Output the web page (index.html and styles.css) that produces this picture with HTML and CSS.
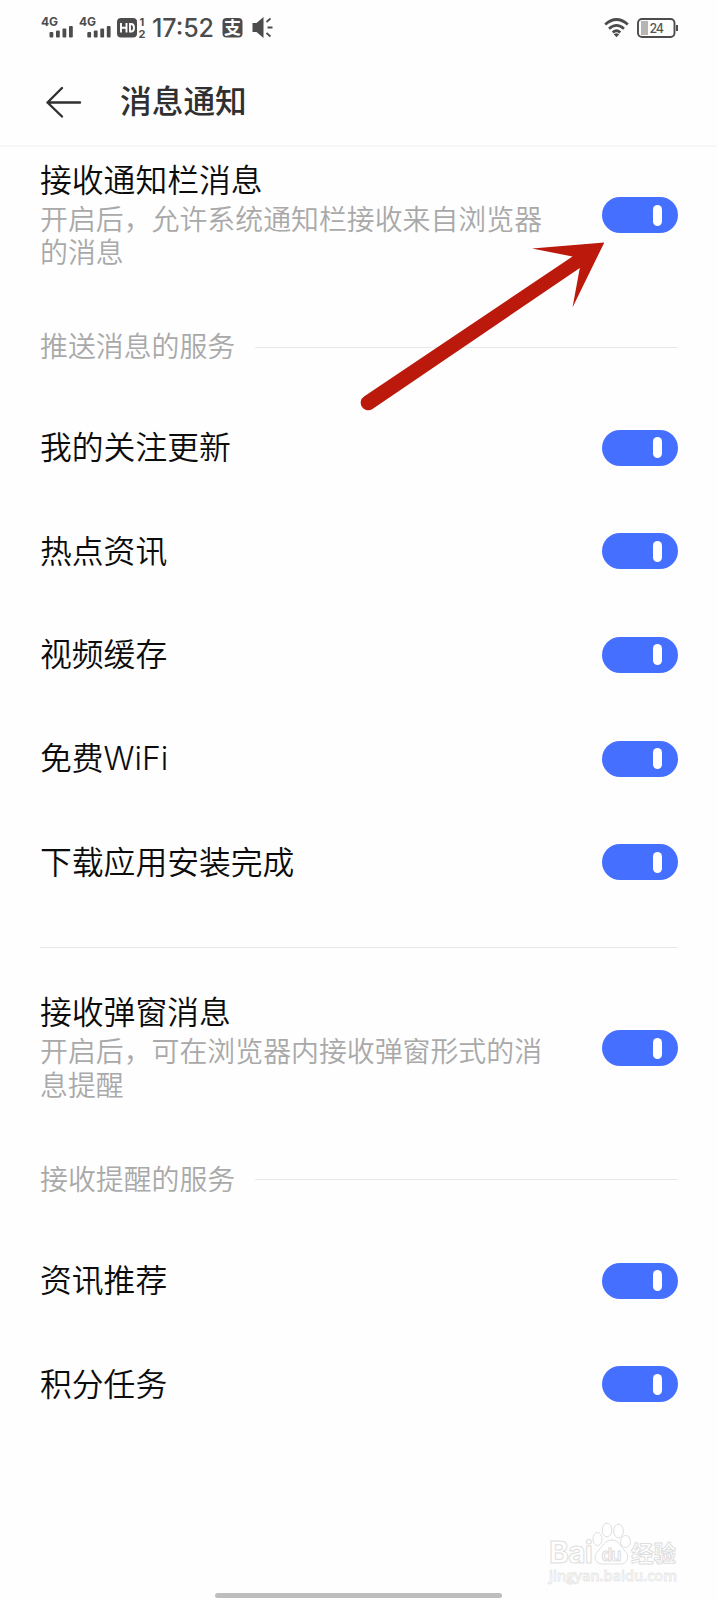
FILE: index.html
```html
<!DOCTYPE html>
<html lang="zh-CN">
<head>
<meta charset="utf-8">
<title>消息通知</title>
<link rel="stylesheet" href="styles.css">
</head>
<body>
<div class="screen">
  <div class="status">
    <svg class="status-left" width="245" height="30" viewBox="0 0 245 30">
      <g fill="#4c4c4c" font-family="Inter, sans-serif" font-weight="700" font-size="12">
        <text x="1" y="11" textLength="17">4G</text>
        <text x="39" y="11" textLength="17">4G</text>
        <g id="bars">
          <rect x="9.5" y="17" width="3.8" height="5.500" rx="1"/><rect x="16" y="15.5" width="3.8" height="7" rx="1"/><rect x="22.5" y="13.5" width="3.8" height="9" rx="1"/><rect x="29" y="11" width="3.8" height="11.500" rx="1"/>
        </g>
        <use href="#bars" x="37.8"/>
        <rect x="77" y="3" width="20" height="19.5" rx="4"/>
        <path fill="none" stroke="#fff" stroke-width="1.900" d="M81 8v9.500M86.500 8v9.500M81 12.700h5.500M90 9v7.500h1.200q2.800 0 2.800-3.750t-2.800-3.750z"/>
        <text x="99.500" y="10.500" font-size="11">1</text>
        <text x="98.500" y="22.500" font-size="11">2</text>
        <text x="112" y="22" font-size="25" font-weight="500" textLength="62">17:52</text>
        <rect x="182.500" y="3" width="20" height="19.500" rx="4"/>
        <text x="184" y="19" font-family="Noto Sans CJK SC, sans-serif" font-size="17" fill="#fff">支</text>
        <path d="M212.500 8h4l7-6v21l-7-6h-4z"/>
        <path fill="none" stroke="#4c4c4c" stroke-width="1.800" d="M226.500 7l4-3.500M227.500 12.500h5M226.500 18l4 3.500"/>
      </g>
    </svg>
    <svg class="status-right" width="76" height="24" viewBox="0 0 76 24">
      <g fill="none" stroke="#4c4c4c">
        <path stroke-width="2.700" d="M2.200 7.500Q13.500-2.500 24.800 7.500M6 11.700Q13.500 5 21 11.700M9.700 15.500Q13.500 12 17.300 15.500"/>
        <path fill="#4c4c4c" stroke="none" d="M10.700 17.300q2.800-2 5.600 0l-2.800 3z"/>
        <rect x="35" y="2" width="36.500" height="18" rx="4" stroke-width="1.900"/>
        <path stroke-width="2" d="M74 8v6"/>
      </g>
      <rect x="38" y="4" width="7" height="14" fill="#b5b5b5"/>
      <text x="46.500" y="15.500" font-family="Inter, sans-serif" font-size="12.500" font-weight="500" fill="#555" textLength="14.500">24</text>
    </svg>
  </div>

  <header class="header">
    <svg width="36" height="32" viewBox="0 0 36 32"><path fill="none" stroke="#303030" stroke-width="2.400" stroke-linecap="round" stroke-linejoin="round" d="M16 2L1.500 16.500l14.500 14M1.500 16.500h32.500"/></svg>
    <h1 class="title">消息通知</h1>
  </header>

  <main class="content">
    <section class="feature">
      <div class="feature-text">
        <h2 class="name">接收通知栏消息</h2>
        <p class="desc">开启后，允许系统通知栏接收来自浏览器<br>的消息</p>
      </div>
      <span class="toggle"></span>
    </section>
    <div class="group-label"><span>推送消息的服务</span></div>
    <ul class="list">
      <li class="row"><span class="name">我的关注更新</span><span class="toggle"></span></li>
      <li class="row"><span class="name">热点资讯</span><span class="toggle"></span></li>
      <li class="row"><span class="name">视频缓存</span><span class="toggle"></span></li>
      <li class="row"><span class="name">免费<span class="latin">WiFi</span></span><span class="toggle"></span></li>
      <li class="row"><span class="name">下载应用安装完成</span><span class="toggle"></span></li>
    </ul>
    <section class="feature feature-popup">
      <div class="feature-text">
        <h2 class="name">接收弹窗消息</h2>
        <p class="desc">开启后，可在浏览器内接收弹窗形式的消<br>息提醒</p>
      </div>
      <span class="toggle"></span>
    </section>
    <div class="group-label"><span>接收提醒的服务</span></div>
    <ul class="list">
      <li class="row"><span class="name">资讯推荐</span><span class="toggle"></span></li>
      <li class="row"><span class="name">积分任务</span><span class="toggle"></span></li>
    </ul>
  </main>

  <svg class="pointer" width="250" height="180" viewBox="0 0 250 180">
    <path fill="#bb190c" d="M244.300 2.500L172 8.500l40.500 8L4 156.500a7 7 0 0 0 8.500 12.500L219.800 28l-7.300 39.500z"/>
  </svg>

  <svg class="watermark" width="140" height="70" viewBox="0 0 140 70">
    <g fill="#fff" stroke="#dedede" stroke-width="1" font-family="Inter, sans-serif" font-weight="700">
      <text x="0" y="42.500" font-size="30" textLength="44">Bai</text>
      <ellipse cx="48.500" cy="19" rx="4.500" ry="6.500"/><ellipse cx="58" cy="10" rx="4.800" ry="6.800"/><ellipse cx="69.500" cy="11" rx="4.800" ry="6.800"/><ellipse cx="76.500" cy="21.500" rx="5" ry="6"/>
      <path d="M63 20c7 0 8 6 12 10 7 6 3 14-4 14h-17c-8 0-11-8-4-14 4-4 6-10 13-10z"/>
      <text x="52.500" y="40.500" font-size="17" font-weight="600" textLength="20">du</text>
      <text x="82" y="41.500" font-family="Noto Sans CJK SC, sans-serif" font-size="22.500" textLength="45">经验</text>
      <text x="0" y="60.500" font-family="Open Sans, sans-serif" font-size="14.500" font-weight="600" stroke="#e6e6e6" stroke-width=".8" textLength="128">jingyan.baidu.com</text>
    </g>
  </svg>
  <div class="home-bar"></div>
</div>
</body>
</html>
```
FILE: styles.css
```css
* { box-sizing: border-box; }
body {
  margin: 0;
  background: #fefefe;
  font-family: "Noto Sans CJK SC", sans-serif;
}
h1, h2, p, ul { margin: 0; padding: 0; }
svg { overflow: visible; }
.screen {
  position: relative;
  width: 717px;
  height: 1600px;
  overflow: hidden;
  background: #fefefe;
}
.status {
  display: flex;
  justify-content: space-between;
  height: 56px;
  padding: 15px 38px 0 40px;
}
.status-right { margin-top: 2px; }
.header {
  display: flex;
  align-items: center;
  gap: 38px;
  height: 91px;
  padding: 2px 40px 0 46px;
  border-bottom: 2px solid #f7f7f7;
}
.title {
  padding-bottom: 5px;
  font-size: 31.700px;
  line-height: 40px;
  font-weight: 500;
  color: #303030;
}
.content { padding: 0 39px 0 40px; }
.feature {
  display: flex;
  justify-content: space-between;
  height: 137px;
  padding-top: 10px;
}
.feature .toggle { margin-top: 40px; }
.name {
  font-size: 31.800px;
  line-height: 42px;
  font-weight: 350;
  color: #0c0c0c;
  white-space: nowrap;
}
.row .name { padding-bottom: 5px; }
.latin { font-family: Inter, sans-serif; font-size: 32px; line-height: 1; }
.desc {
  margin-top: 3px;
  font-size: 27.900px;
  line-height: 33.300px;
  font-weight: 350;
  color: #a9a9a9;
  white-space: nowrap;
}
.toggle {
  display: flex;
  flex: none;
  justify-content: flex-end;
  align-items: center;
  width: 76px;
  height: 36px;
  padding-right: 16px;
  border-radius: 18px;
  background: #456fff;
}
.toggle::after {
  content: "";
  width: 9px;
  height: 21px;
  border-radius: 4.500px;
  background: #fff;
}
.group-label {
  display: flex;
  align-items: center;
  gap: 20px;
  height: 126px;
  font-size: 27.900px;
  line-height: 40px;
  font-weight: 350;
  color: #a9a9a9;
}
.group-label span { padding-bottom: 4px; }
.group-label::after {
  content: "";
  flex: 1;
  height: 1px;
  background: #e8e8e8;
}
.list { list-style: none; padding-top: 86px; margin-top: -100px; }
.row {
  display: flex;
  justify-content: space-between;
  align-items: center;
  height: 103.600px;
}
.feature-popup {
  height: 169.500px;
  margin-top: 33.500px;
  padding-top: 41px;
  border-top: 1px solid #e8e8e8;
}
.feature-popup .toggle { margin-top: 41px; }
.pointer { position: absolute; left: 360px; top: 240px; }
.watermark { position: absolute; left: 549px; top: 1520px; }
.home-bar {
  position: absolute;
  left: 215px;
  top: 1593px;
  width: 287px;
  height: 5px;
  border-radius: 3px;
  background: #bebebe;
}
```
